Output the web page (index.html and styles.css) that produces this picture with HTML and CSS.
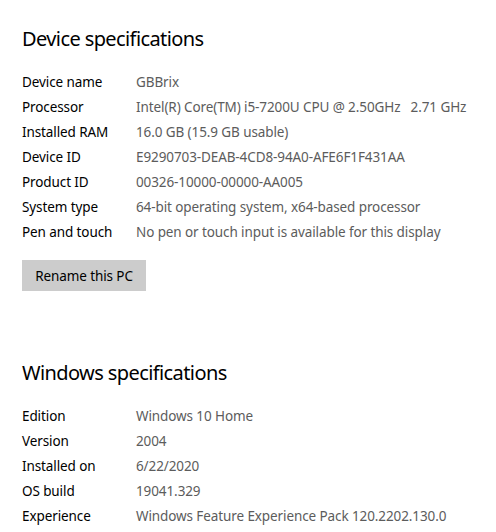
FILE: index.html
```html
<!DOCTYPE html>
<html>
<head>
<meta charset="utf-8">
<link rel="stylesheet" href="styles.css">
</head>
<body>
<div class="page">
  <section class="section">
    <h2 class="title">Device specifications</h2>
    <dl class="specs">
      <div class="row"><dt>Device name</dt><dd>GBBrix</dd></div>
      <div class="row"><dt>Processor</dt><dd>Intel(R) Core(TM) i5-7200U CPU @ 2.50GHz&nbsp;&nbsp;&nbsp;2.71 GHz</dd></div>
      <div class="row"><dt>Installed RAM</dt><dd>16.0 GB (15.9 GB usable)</dd></div>
      <div class="row"><dt>Device ID</dt><dd>E9290703-DEAB-4CD8-94A0-AFE6F1F431AA</dd></div>
      <div class="row"><dt>Product ID</dt><dd>00326-10000-00000-AA005</dd></div>
      <div class="row"><dt>System type</dt><dd>64-bit operating system, x64-based processor</dd></div>
      <div class="row"><dt>Pen and touch</dt><dd>No pen or touch input is available for this display</dd></div>
    </dl>
    <button class="btn">Rename this PC</button>
  </section>
  <section class="section section-win">
    <h2 class="title">Windows specifications</h2>
    <dl class="specs">
      <div class="row"><dt>Edition</dt><dd>Windows 10 Home</dd></div>
      <div class="row"><dt>Version</dt><dd>2004</dd></div>
      <div class="row"><dt>Installed on</dt><dd>6/22/2020</dd></div>
      <div class="row"><dt>OS build</dt><dd>19041.329</dd></div>
      <div class="row"><dt>Experience</dt><dd>Windows Feature Experience Pack 120.2202.130.0</dd></div>
    </dl>
  </section>
</div>
</body>
</html>
```
FILE: styles.css
```css
* { box-sizing: border-box; }
html, body { margin: 0; padding: 0; background: #fff; }
body {
  font-family: "Noto Sans", "Open Sans", "Liberation Sans", sans-serif;
  color: #000;
  width: 496px;
  height: 532px;
  overflow: hidden;
}
.page {
  padding: 25px 0 0 22px;
}
.title {
  margin: 0;
  font-size: 20px;
  letter-spacing: -0.6px;
  font-weight: 400;
  line-height: 28px;
}
.specs {
  margin: 16px 0 0 0;
  display: flex;
  flex-direction: column;
}
.row {
  display: flex;
  height: 25px;
  align-items: center;
  font-size: 13.5px;
  letter-spacing: -0.1px;
}
.row dt {
  width: 114px;
  flex: none;
}
.row dd {
  margin: 0;
  color: #5c5c5c;
  white-space: nowrap;
}
.btn {
  margin-top: 16px;
  display: block;
  width: 124px;
  height: 31px;
  border: none;
  background: #cccccc;
  font-family: inherit;
  font-size: 13.5px;
  letter-spacing: -0.1px;
  color: #000;
  padding: 0;
}
.section-win {
  margin-top: 68px;
}
```
